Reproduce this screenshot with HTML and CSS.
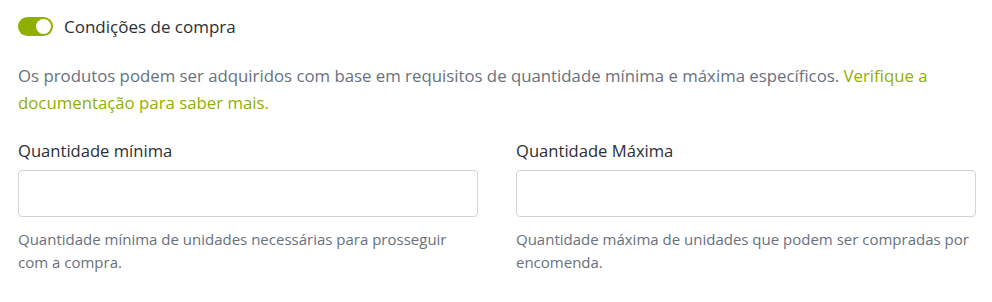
FILE: index.html
```html
<!DOCTYPE html>
<html lang="pt">
<head>
<meta charset="utf-8">
<link rel="stylesheet" href="styles.css">
</head>
<body>
<div class="panel">
  <div class="toggle-row">
    <span class="switch"><span class="knob"></span></span>
    <span class="toggle-label">Condições de compra</span>
  </div>
  <p class="desc">Os produtos podem ser adquiridos com base em requisitos de quantidade mínima e máxima específicos. <a class="link" href="#">Verifique a documentação para saber mais.</a></p>
  <div class="fields">
    <div class="field">
      <label class="label">Quantidade mínima</label>
      <input class="input" type="text">
      <p class="help">Quantidade mínima de unidades necessárias para prosseguir com a compra.</p>
    </div>
    <div class="field">
      <label class="label">Quantidade Máxima</label>
      <input class="input" type="text">
      <p class="help">Quantidade máxima de unidades que podem ser compradas por encomenda.</p>
    </div>
  </div>
</div>
</body>
</html>
```

FILE: styles.css
```css
html, body {
  margin: 0;
  padding: 0;
  background: #ffffff;
}
body {
  font-family: "Open Sans", "Liberation Sans", sans-serif;
  color: #2b2f33;
}
.panel {
  padding: 13px 16px 0 18px;
}
.toggle-row {
  display: flex;
  align-items: center;
  gap: 11px;
  height: 26px;
}
.switch {
  width: 35px;
  height: 19px;
  border-radius: 10px;
  background: #8fb000;
  display: flex;
  align-items: center;
  justify-content: flex-end;
  padding: 0 2px;
  box-sizing: border-box;
}
.knob {
  width: 15px;
  height: 15px;
  border-radius: 50%;
  background: #ffffff;
}
.toggle-label {
  font-size: 17px;
  color: #2b2f33;
}
.desc {
  margin: 23px 0 0 0;
  font-size: 16.8px;
  line-height: 27px;
  color: #68717d;
}
.link {
  color: #8fb000;
  text-decoration: none;
}
.fields {
  display: grid;
  grid-template-columns: 1fr 1fr;
  column-gap: 38px;
  margin-top: 24px;
}
.field {
  display: flex;
  flex-direction: column;
}
.label {
  font-size: 16.6px;
  line-height: 22px;
  color: #2b2f33;
}
.input {
  margin-top: 8px;
  height: 47px;
  box-sizing: border-box;
  border: 1px solid #cfd4da;
  border-radius: 4px;
  background: #ffffff;
  font: inherit;
  padding: 0 12px;
}
.help {
  margin: 11px 0 0 0;
  font-size: 15px;
  line-height: 23px;
  color: #68717d;
}
```
